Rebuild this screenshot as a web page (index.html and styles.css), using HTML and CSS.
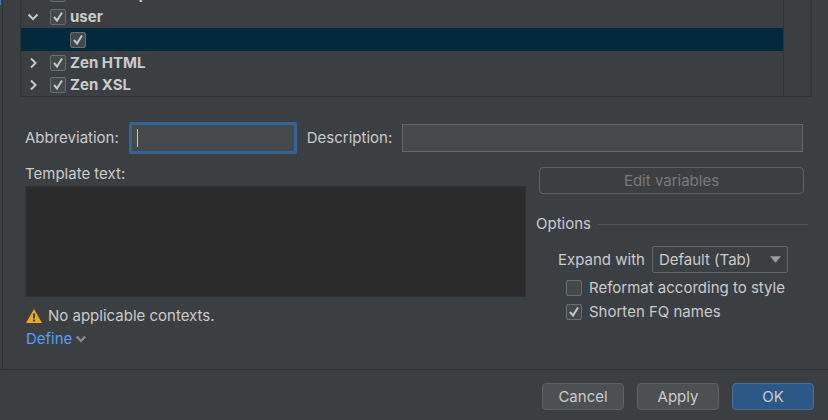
FILE: index.html
```html
<!DOCTYPE html>
<html lang="en">
<head>
<meta charset="utf-8">
<title>Live Templates</title>
<link rel="stylesheet" href="styles.css">
</head>
<body>
<form class="dialog">
  <div class="main">
    <div class="sidebar"><span class="sidebar-selection"></span></div>
    <div class="content">
      <div class="tree">
        <div class="tree-rows">
          <div class="row row-cut">
            <span class="arrow"></span>
            <label class="check strong"><input type="checkbox" checked><span>Shell Script</span></label>
          </div>
          <div class="row">
            <svg class="arrow" viewBox="0 0 12 12"><path d="M1.500 3.500 6 8l4.500-4.500"/></svg>
            <label class="check strong"><input type="checkbox" checked><span>user</span></label>
          </div>
          <div class="row selected">
            <input type="checkbox" checked aria-label="Template enabled">
          </div>
          <div class="row">
            <svg class="arrow" viewBox="0 0 12 12"><path d="M4 1.500 8.500 6 4 10.500"/></svg>
            <label class="check strong"><input type="checkbox" checked><span>Zen HTML</span></label>
          </div>
          <div class="row row-last">
            <svg class="arrow" viewBox="0 0 12 12"><path d="M4 1.500 8.500 6 4 10.500"/></svg>
            <label class="check strong"><input type="checkbox" checked><span>Zen XSL</span></label>
          </div>
        </div>
        <div class="tree-tools"></div>
      </div>

      <div class="fields">
        <label for="abbr">Abbreviation:</label>
        <span class="caret"><input class="field focused" id="abbr" type="text"></span>
        <label for="desc">Description:</label>
        <input class="field wide" id="desc" type="text">
      </div>

      <div class="editor">
        <div class="template">
          <label for="template">Template text:</label>
          <textarea id="template"></textarea>
          <div class="context">
            <svg class="warning" viewBox="0 0 16 16"><path fill="#f2a71b" d="M8 1 16 15H0z"/><path fill="#3c3f41" d="M7 5.500h2v5H7zM7 11.500h2v2H7z"/></svg>
            <span>No applicable contexts.</span>
          </div>
          <a class="define" href="#">Define<svg viewBox="0 0 10 10"><path d="M1.500 3 5 6.500 8.500 3"/></svg></a>
        </div>
        <div class="side">
          <button class="button edit" type="button" disabled>Edit variables</button>
          <fieldset class="options">
            <legend>Options</legend>
            <div class="expand">
              <label for="expand">Expand with</label>
              <span class="select"><select id="expand"><option>Default (Tab)</option></select><svg viewBox="0 0 12 8"><path d="M0 0h12L6 7z"/></svg></span>
            </div>
            <label class="check"><input type="checkbox"><span>Reformat according to style</span></label>
            <label class="check"><input type="checkbox" checked><span>Shorten FQ names</span></label>
          </fieldset>
        </div>
      </div>
    </div>
  </div>
  <div class="footer">
    <button class="button" type="button">Cancel</button>
    <button class="button" type="button">Apply</button>
    <button class="button primary" type="submit">OK</button>
  </div>
</form>
</body>
</html>
```
FILE: styles.css
```css
* {
  box-sizing: border-box;
}

body {
  margin: 0;
  background: #3c3f41;
  color: #c9cbcc;
  font: 15px/20px Inter, "Liberation Sans", sans-serif;
}

button, input, select, textarea {
  margin: 0;
  color: inherit;
  font: inherit;
}

.dialog {
  display: flex;
  flex-direction: column;
  min-height: 100vh;
}

.main {
  display: flex;
  flex: 1;
  border-bottom: 1px solid #2c2f30;
}

.sidebar {
  width: 3px;
  border-right: 1px solid #303335;
}

.sidebar-selection {
  display: block;
  width: 1px;
  height: 5px;
  background: #3f73c4;
}

.content {
  flex: 1;
  min-width: 0;
  padding: 0 16px 0 17px;
}

/* Template group tree */
.tree {
  display: flex;
  border: 1px solid #303335;
  border-top: 0;
}

.tree-rows {
  flex: 1;
}

.tree-tools {
  width: 28px;
  border-left: 1px solid #303335;
}

.row {
  display: flex;
  align-items: center;
  gap: 11px;
  height: 23px;
  padding-left: 6px;
}

.row-cut {
  align-items: flex-end;
  height: 5px;
  overflow: hidden;
}

.row-cut .check {
  padding-bottom: 1px;
}

.row-last {
  height: 22px;
}

.selected {
  padding-left: 49px;
  background: #03293f;
}

.arrow {
  width: 12px;
  height: 12px;
  fill: none;
  stroke: #c4c6c7;
  stroke-width: 2;
}

.check {
  display: flex;
  align-items: center;
  gap: 4px;
}

.strong {
  font-weight: 700;
}

input[type="checkbox"] {
  appearance: none;
  flex: none;
  width: 16px;
  height: 16px;
  border: 1px solid #6b6e70;
  border-radius: 2px;
  background: #43494a;
}

input[type="checkbox"]:checked {
  background: #43494a url("data:image/svg+xml,%3Csvg xmlns='http://www.w3.org/2000/svg' viewBox='0 0 14 14'%3E%3Cpath d='M3 7 6 10.500 11 2.500' fill='none' stroke='%23c4c6c7' stroke-width='2'/%3E%3C/svg%3E");
}

/* Abbreviation and description */
.fields {
  display: flex;
  align-items: center;
  gap: 10px;
  margin: 25px 9px 0 5px;
}

.field {
  display: block;
  width: 168px;
  height: 28px;
  padding: 0 8px;
  border: 1px solid #646768;
  border-radius: 0;
  outline: 0;
  background: #45494a;
}

.focused {
  height: 32px;
  padding: 0 5px;
  border: 3px solid #316396;
  border-radius: 2px;
}

.caret {
  position: relative;
}

.caret::after {
  content: "";
  position: absolute;
  top: 7px;
  left: 8px;
  width: 1px;
  height: 18px;
  background: #c9cbcc;
}

.wide {
  flex: 1;
  min-width: 0;
}

/* Template text and options */
.editor {
  display: flex;
  gap: 10px;
  margin: 10px 4px 0 5px;
}

.template {
  flex: 1;
  min-width: 0;
}

.template label {
  display: block;
}

textarea {
  display: block;
  width: 100%;
  height: 111px;
  margin-top: 2px;
  padding: 4px;
  border: 1px solid #323232;
  outline: 0;
  background: #2b2b2b;
  resize: none;
}

.context {
  display: flex;
  align-items: center;
  gap: 6px;
  margin: 9px 0 0 1px;
}

.warning {
  width: 16px;
  height: 16px;
}

.define {
  display: inline-flex;
  align-items: center;
  gap: 3px;
  margin: 3px 0 0 1px;
  color: #589df6;
  text-decoration: none;
}

.define svg {
  width: 12px;
  height: 12px;
  fill: none;
  stroke: #868a8c;
  stroke-width: 2;
}

.side {
  width: 272px;
}

.button {
  width: 82px;
  height: 27px;
  padding: 0;
  border: 1px solid #5e6162;
  border-radius: 4px;
  background: #4c5052;
}

.edit {
  display: block;
  width: 265px;
  margin: 3px 0 0 3px;
  background: none;
  color: #777a7b;
}

.options {
  margin: 20px 0 0;
  padding: 0;
  border: 0;
}

.options legend {
  display: flex;
  align-items: center;
  gap: 7px;
  width: 100%;
  padding: 0;
}

.options legend::after {
  content: "";
  flex: 1;
  height: 1px;
  background: #515456;
}

.options .check {
  gap: 7px;
  margin: 4px 0 0 30px;
}

.expand {
  display: flex;
  align-items: center;
  gap: 7px;
  margin: 12px 0 5px 22px;
}

.select {
  position: relative;
}

.select select {
  display: block;
  appearance: none;
  width: 136px;
  height: 27px;
  padding: 0 6px;
  border: 1px solid #646768;
  border-radius: 2px;
  background: #3c3f41;
}

.select svg {
  position: absolute;
  top: 10px;
  right: 7px;
  width: 11px;
  height: 8px;
  fill: #9a9da0;
  pointer-events: none;
}

.footer {
  display: flex;
  justify-content: flex-end;
  gap: 13px;
  padding: 13px 14px 10px;
}

.primary {
  border-color: #4c708c;
  background: #2c5887;
}
```
